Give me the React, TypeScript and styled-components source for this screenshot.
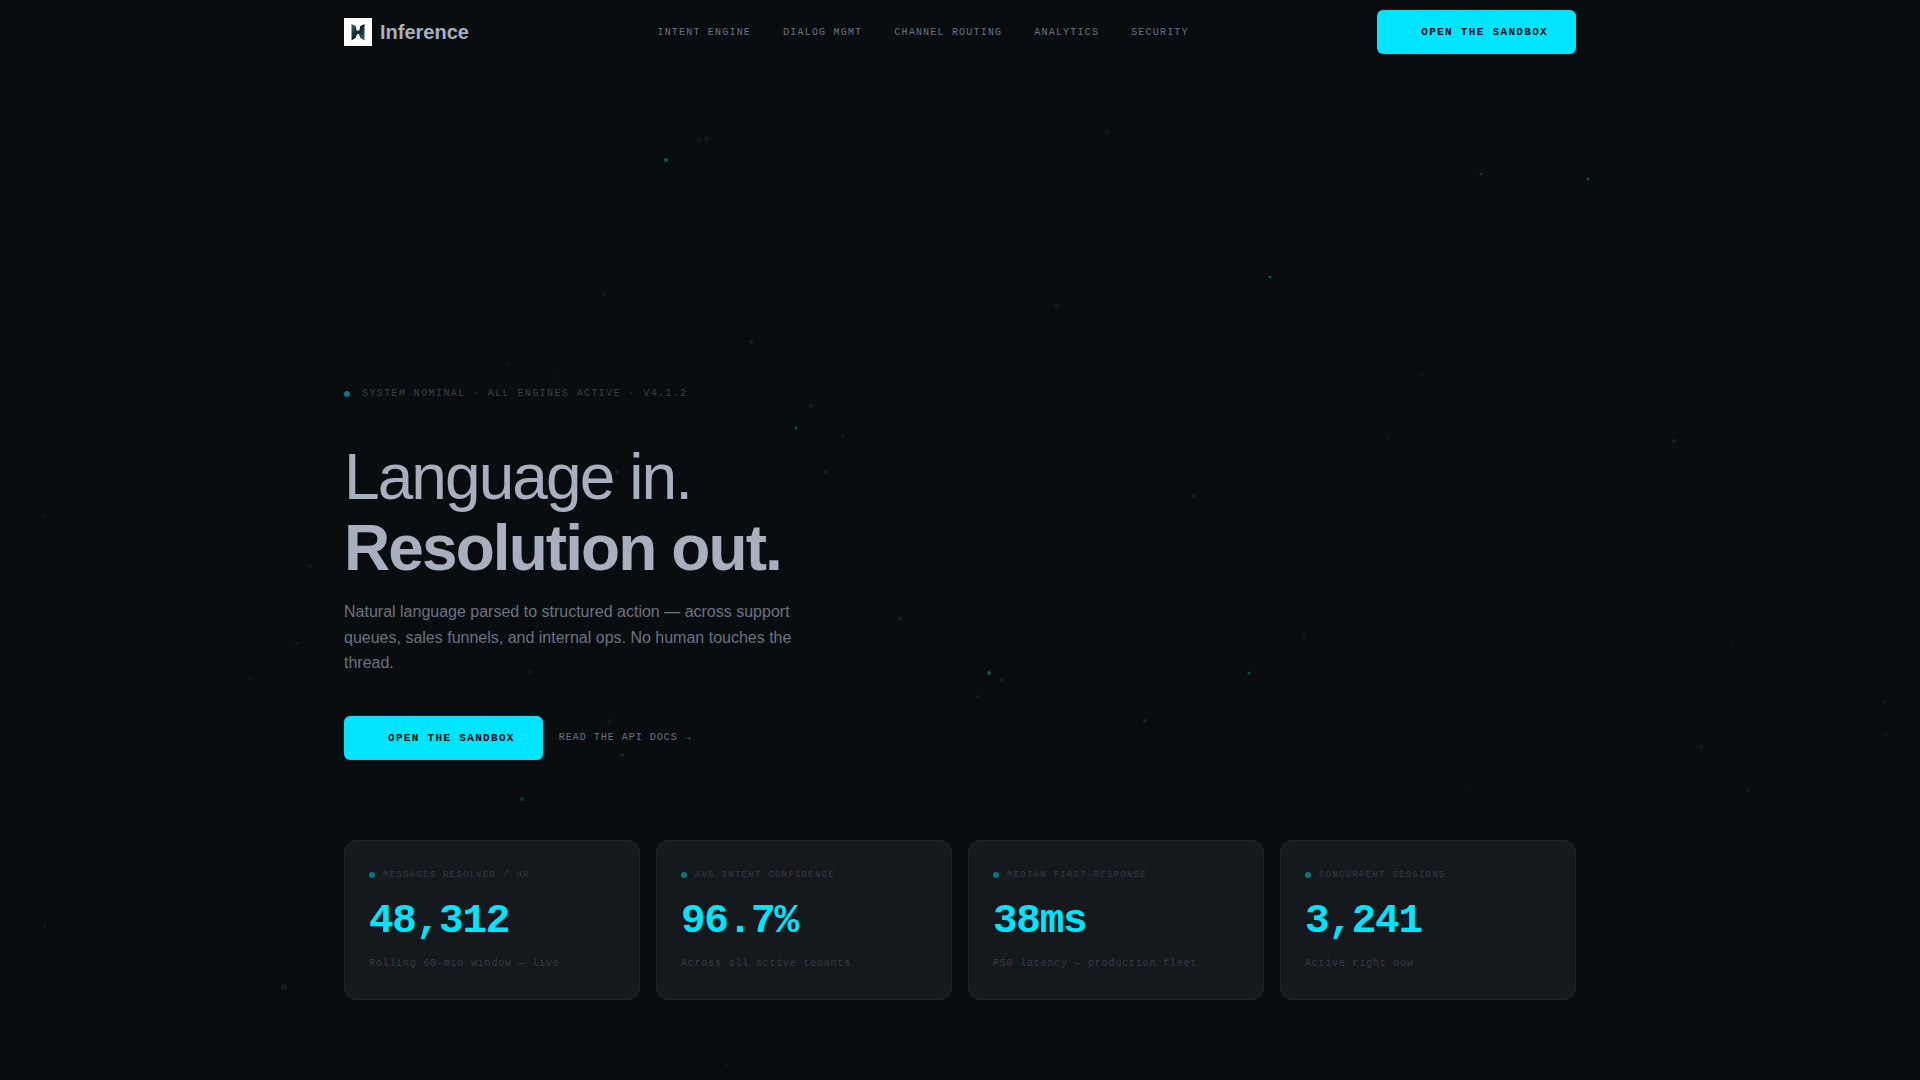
import React from "react";
import styled, { createGlobalStyle } from "styled-components";

const sans = `"Liberation Sans", Arial, sans-serif`;
const mono = `"Liberation Mono", "Courier New", monospace`;

const GlobalStyle = createGlobalStyle`
  *, *::before, *::after { box-sizing: border-box; }
  html { background: #0a0d10; }
  body { margin: 0; font-family: ${sans}; color: #a8b0c0; }
  h1, p, dl, dt, dd { margin: 0; }
  a { color: inherit; text-decoration: none; }
`;

const Page = styled.div`
  position: relative;
  display: flex;
  flex-direction: column;
  min-height: 100vh;
  background: #0a0d10;
`;

const Backdrop = styled.svg`
  position: absolute;
  inset: 0;
  width: 100%;
  height: 100%;
  pointer-events: none;
`;

const Container = styled.div`
  position: relative;
  width: 100%;
  max-width: 1280px;
  margin: 0 auto;
  padding: 0 24px;
`;

const HeaderRow = styled(Container)`
  display: flex;
  align-items: center;
  justify-content: space-between;
  height: 64px;
`;

const Brand = styled.a`
  display: flex;
  align-items: center;
  gap: 8px;
  font-size: 20px;
  font-weight: 700;
  line-height: 28px;
`;

const NavLinks = styled.nav`
  display: flex;
  gap: 32px;
  padding-top: 2px;
`;

const TextLink = styled.a<{ $tracking: string }>`
  font-family: ${mono};
  font-size: 10px;
  line-height: 16px;
  letter-spacing: ${(p) => p.$tracking};
  text-transform: uppercase;
  color: #6b7280;
`;

const PrimaryButton = styled.button`
  height: 44px;
  padding: 0 28px 0 44px;
  border: 0;
  border-radius: 6px;
  background: #00e5ff;
  color: #0a0d10;
  font-family: ${mono};
  font-size: 11px;
  font-weight: 700;
  letter-spacing: 0.12em;
  text-transform: uppercase;
  white-space: nowrap;
  cursor: pointer;
`;

const Hero = styled(Container)`
  flex: 1;
  display: flex;
  flex-direction: column;
  justify-content: flex-end;
  padding-bottom: 80px;
`;

const Dot = styled.span`
  flex: none;
  width: 6px;
  height: 6px;
  border-radius: 50%;
  background: #057785;
`;

const Status = styled.p`
  display: flex;
  align-items: center;
  gap: 12px;
  font-family: ${mono};
  font-size: 10px;
  line-height: 16px;
  letter-spacing: 0.14em;
  text-transform: uppercase;
  color: #3a3f4a;
`;

const Title = styled.h1`
  margin-top: 40px;
  font-size: 64px;
  line-height: 1.1;
  font-weight: 400;
  letter-spacing: -0.03em;

  strong { display: block; font-weight: 700; }
`;

const Lead = styled.p`
  max-width: 480px;
  margin-top: 16px;
  font-size: 16px;
  line-height: 1.6;
  color: #6b7280;
`;

const Actions = styled.div`
  display: flex;
  align-items: center;
  gap: 16px;
  margin-top: 40px;
`;

const Stats = styled.dl`
  display: grid;
  grid-template-columns: repeat(4, 1fr);
  gap: 16px;
  margin-top: 80px;
`;

const Card = styled.div`
  padding: 24px;
  border: 1px solid #1f2327;
  border-radius: 12px;
  background: #15181c;
  font-family: ${mono};
`;

const CardLabel = styled.dt`
  display: flex;
  align-items: center;
  gap: 8px;
  font-size: 9px;
  line-height: 20px;
  letter-spacing: 0.14em;
  text-transform: uppercase;
  color: #363a45;
`;

const CardValue = styled.dd`
  margin-top: 16px;
  font-size: 41px;
  line-height: 40px;
  font-weight: 700;
  letter-spacing: -0.03em;
  color: #00e5ff;
`;

const CardNote = styled.dd`
  margin-top: 12px;
  font-size: 10px;
  line-height: 22px;
  letter-spacing: 0.08em;
  color: #363a45;
`;

const links = ["Intent Engine", "Dialog Mgmt", "Channel Routing", "Analytics", "Security"];

const stats = [
  { label: "Messages resolved / hr", value: "48,312", note: "Rolling 60-min window — live" },
  { label: "Avg intent confidence", value: "96.7%", note: "Across all active tenants" },
  { label: "Median first-response", value: "38ms", note: "P50 latency — production fleet" },
  { label: "Concurrent sessions", value: "3,241", note: "Active right now" },
];

// x, y, radius, opacity of the lit points
const sparks: [number, number, number, number][] = [
  [666, 160, 2, 0.4], [1588, 179, 1.5, 0.35], [1481, 174, 1.5, 0.2], [1270, 277, 1.5, 0.35],
  [796, 428, 1.5, 0.38], [989, 673, 2, 0.4], [1249, 673, 1.5, 0.35], [522, 799, 2, 0.22],
];

// x, y, radius, opacity of the faint points
const motes: [number, number, number, number][] = [
  [707, 139, 2, 0.1], [699, 141, 2, 0.05], [1107, 131, 2, 0.05], [605, 295, 2, 0.05], [1056, 305, 2, 0.09],
  [751, 342, 2, 0.1], [507, 364, 2, 0.06], [554, 376, 2, 0.04], [811, 406, 2, 0.1],
  [843, 436, 2, 0.08], [826, 472, 2, 0.1], [617, 472, 2, 0.1], [1194, 496, 2, 0.09],
  [1422, 374, 2, 0.05], [1388, 438, 2, 0.05], [1674, 441, 2, 0.13], [310, 566, 2, 0.08],
  [45, 516, 2, 0.06], [297, 643, 2, 0.07], [250, 678, 2, 0.06], [530, 672, 2, 0.08],
  [900, 619, 2, 0.13], [1002, 680, 2, 0.1], [978, 697, 2, 0.1], [1145, 721, 2, 0.14],
  [1304, 636, 2, 0.05], [1701, 747, 2, 0.1], [1748, 790, 2, 0.06], [1885, 702, 2, 0.08],
  [1887, 735, 2, 0.06], [1732, 645, 2, 0.04], [609, 721, 2, 0.08], [622, 755, 2, 0.1],
  [284, 987, 3, 0.12], [45, 926, 2, 0.06], [726, 1065, 2, 0.07], [1465, 789, 2, 0.04],
];

const Logo = () => (
  <svg width="28" height="28" viewBox="0 0 28 28" aria-hidden="true">
    <defs>
      <linearGradient id="mark" x1="0" y1="0" x2="1" y2="1">
        <stop offset="0" stopColor="#3a6467" />
        <stop offset="0.5" stopColor="#0c2429" />
        <stop offset="1" stopColor="#3f686b" />
      </linearGradient>
    </defs>
    <rect width="28" height="28" fill="#fff" />
    <path d="M7.5 6 L11.8 8 L12.6 12.5 H15.4 L16.2 8 L20.5 6 V22.5 L16.4 20 L14.8 16 H13.2 L11.6 20 L7.5 22.5 Z" fill="url(#mark)" />
  </svg>
);

export default function App() {
  return (
    <>
      <GlobalStyle />
      <Page>
        <Backdrop viewBox="0 0 1920 1080" preserveAspectRatio="xMidYMid slice" aria-hidden="true">
          <g fill="none" stroke="#06080b" strokeOpacity="0.22" strokeWidth="12">
            <ellipse cx="960" cy="540" rx="485" ry="205" />
            <ellipse cx="960" cy="540" rx="860" ry="355" />
            <ellipse cx="960" cy="540" rx="940" ry="390" />
            <ellipse cx="960" cy="540" rx="1270" ry="535" />
          </g>
          <g fill="#00d9b0">
            {sparks.map(([x, y, r, o]) => (
              <circle key={`${x}-${y}`} cx={x} cy={y} r={r} opacity={o} />
            ))}
          </g>
          <g fill="#5fa89a">
            {motes.map(([x, y, r, o]) => (
              <circle key={`${x}-${y}`} cx={x} cy={y} r={r} opacity={o} />
            ))}
          </g>
        </Backdrop>
        <header>
          <HeaderRow>
            <Brand href="#">
              <Logo />
              Inference
            </Brand>
            <NavLinks aria-label="Main">
              {links.map((l) => (
                <TextLink key={l} href="#" $tracking="0.12em">{l}</TextLink>
              ))}
            </NavLinks>
            <PrimaryButton type="button">Open the sandbox</PrimaryButton>
          </HeaderRow>
        </header>
        <Hero as="main">
          <Status>
            <Dot />
            System nominal · All engines active · v4.1.2
          </Status>
          <Title>
            Language in.
            <strong>Resolution out.</strong>
          </Title>
          <Lead>
            Natural language parsed to structured action — across support queues, sales funnels, and internal ops. No
            human touches the thread.
          </Lead>
          <Actions>
            <PrimaryButton type="button">Open the sandbox</PrimaryButton>
            <TextLink href="#" $tracking="0.1em">Read the API docs →</TextLink>
          </Actions>
          <Stats>
            {stats.map((s) => (
              <Card key={s.label}>
                <CardLabel>
                  <Dot />
                  {s.label}
                </CardLabel>
                <CardValue>{s.value}</CardValue>
                <CardNote>{s.note}</CardNote>
              </Card>
            ))}
          </Stats>
        </Hero>
      </Page>
    </>
  );
}
